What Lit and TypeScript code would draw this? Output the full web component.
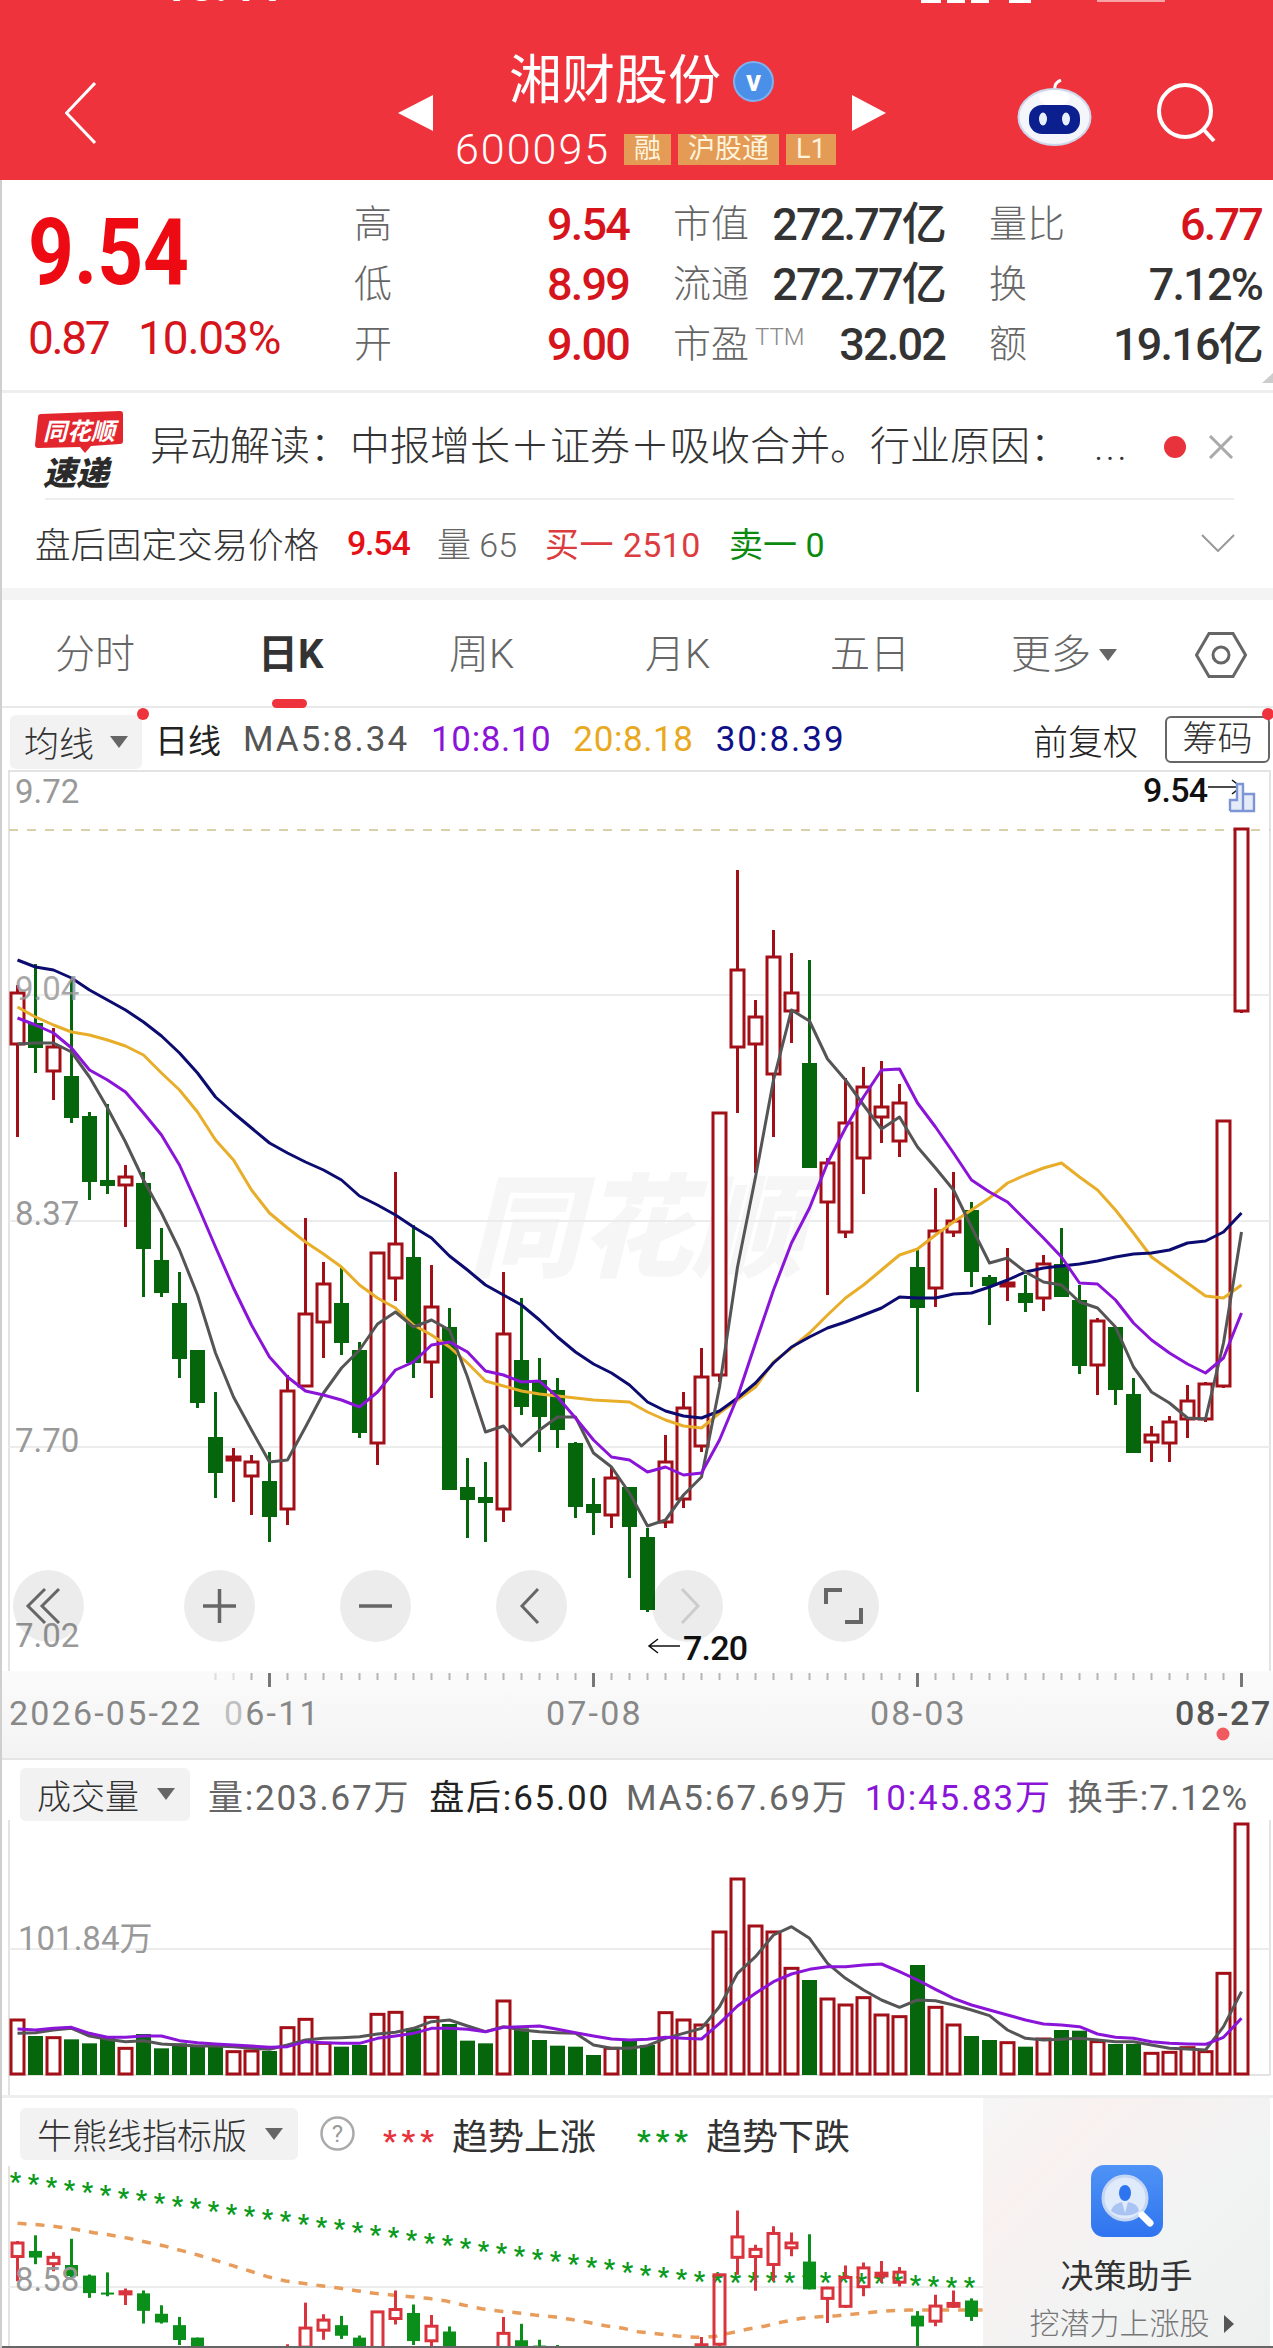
import { LitElement, html, svg, css } from 'lit';
import { customElement } from 'lit/decorators.js';

type Candle = [number, number, number, number];

const X = (i: number) => 17.5 + 18 * i;

// high, body top, body bottom, low in page pixels; the up flag is kept apart
const UP = [0, 2, 6, 12, 13, 15, 16, 17, 20, 21, 23, 27, 33, 36, 37, 38, 39, 40, 41, 42, 43, 45, 46, 47, 48, 49, 51, 52, 55, 57, 60, 63, 64, 65, 66, 67, 68];
const CANDLES: Candle[] = [
  [985, 993, 1044, 1137], [964, 1023, 1048, 1073], [1028, 1047, 1071, 1100], [977, 1076, 1118, 1123],
  [1112, 1116, 1182, 1200], [1104, 1180, 1186, 1194], [1165, 1177, 1185, 1227], [1172, 1183, 1249, 1297],
  [1228, 1260, 1293, 1297], [1272, 1303, 1359, 1378], [1350, 1350, 1403, 1408], [1392, 1437, 1473, 1498],
  [1448, 1457, 1460, 1502], [1455, 1462, 1476, 1515], [1452, 1481, 1517, 1542], [1375, 1391, 1509, 1525],
  [1218, 1314, 1386, 1386], [1262, 1284, 1322, 1358], [1268, 1303, 1343, 1355], [1342, 1350, 1433, 1438],
  [1252, 1253, 1443, 1465], [1172, 1244, 1278, 1301], [1225, 1257, 1363, 1378], [1265, 1307, 1362, 1398],
  [1308, 1327, 1490, 1490], [1458, 1487, 1500, 1538], [1462, 1497, 1503, 1542], [1272, 1334, 1509, 1522],
  [1298, 1360, 1407, 1415], [1358, 1380, 1417, 1452], [1378, 1390, 1430, 1448], [1442, 1443, 1507, 1518],
  [1478, 1504, 1513, 1535], [1468, 1478, 1515, 1528], [1487, 1487, 1527, 1578], [1528, 1537, 1610, 1612],
  [1435, 1462, 1522, 1528], [1392, 1408, 1499, 1508], [1348, 1377, 1446, 1452], [1113, 1113, 1375, 1382],
  [870, 970, 1047, 1113], [1000, 1017, 1044, 1173], [930, 957, 1074, 1137], [953, 993, 1011, 1043],
  [960, 1063, 1168, 1168], [1158, 1163, 1202, 1295], [1078, 1123, 1232, 1238], [1067, 1087, 1158, 1194],
  [1061, 1107, 1117, 1143], [1084, 1103, 1141, 1157], [1250, 1267, 1308, 1392], [1188, 1231, 1288, 1307],
  [1172, 1221, 1232, 1237], [1202, 1210, 1272, 1287], [1275, 1277, 1286, 1325], [1248, 1283, 1286, 1301],
  [1275, 1293, 1303, 1312], [1255, 1264, 1298, 1311], [1228, 1264, 1297, 1297], [1285, 1300, 1366, 1374],
  [1318, 1321, 1365, 1395], [1327, 1327, 1390, 1405], [1378, 1394, 1453, 1453], [1426, 1435, 1442, 1462],
  [1416, 1422, 1443, 1462], [1385, 1401, 1419, 1438], [1382, 1384, 1419, 1422], [1120, 1121, 1386, 1388],
  [828, 829, 1011, 1013],
];

const MA5 = [1044, 1043, 1043, 1052, 1077, 1108, 1142, 1180, 1213, 1250, 1295, 1353, 1397, 1430, 1462, 1460, 1427, 1393, 1368, 1350, 1324, 1312, 1327, 1320, 1330, 1377, 1432, 1426, 1446, 1430, 1417, 1417, 1453, 1467, 1493, 1526, 1520, 1495, 1477, 1387, 1267, 1177, 1080, 1010, 1021, 1059, 1080, 1105, 1129, 1117, 1147, 1168, 1190, 1227, 1263, 1258, 1272, 1282, 1285, 1302, 1308, 1327, 1367, 1392, 1403, 1418, 1419, 1343, 1232];
const MA10 = [1018, 1025, 1033, 1048, 1070, 1080, 1092, 1113, 1135, 1165, 1205, 1247, 1288, 1325, 1357, 1377, 1391, 1395, 1400, 1407, 1392, 1370, 1362, 1345, 1342, 1352, 1371, 1375, 1382, 1381, 1397, 1418, 1440, 1457, 1460, 1472, 1467, 1475, 1473, 1440, 1397, 1343, 1290, 1243, 1208, 1163, 1128, 1097, 1070, 1069, 1103, 1127, 1153, 1180, 1192, 1202, 1220, 1238, 1257, 1283, 1284, 1300, 1323, 1340, 1353, 1364, 1373, 1358, 1313];
const MA20 = [1007, 1017, 1025, 1032, 1035, 1040, 1046, 1055, 1073, 1090, 1112, 1140, 1160, 1190, 1213, 1228, 1242, 1254, 1267, 1285, 1298, 1308, 1325, 1335, 1347, 1363, 1381, 1386, 1391, 1394, 1396, 1398, 1400, 1401, 1402, 1412, 1420, 1426, 1428, 1413, 1400, 1387, 1362, 1348, 1333, 1315, 1298, 1285, 1270, 1255, 1249, 1235, 1222, 1210, 1198, 1183, 1175, 1168, 1163, 1177, 1190, 1210, 1233, 1257, 1270, 1283, 1296, 1298, 1285];
const MA30 = [960, 967, 970, 978, 990, 1000, 1010, 1022, 1036, 1053, 1073, 1097, 1113, 1128, 1143, 1153, 1162, 1170, 1180, 1196, 1205, 1215, 1227, 1238, 1256, 1270, 1285, 1295, 1305, 1320, 1337, 1352, 1364, 1373, 1385, 1402, 1411, 1416, 1418, 1411, 1398, 1383, 1363, 1347, 1337, 1328, 1322, 1315, 1308, 1297, 1298, 1298, 1294, 1293, 1287, 1280, 1272, 1268, 1266, 1264, 1261, 1257, 1254, 1253, 1250, 1243, 1241, 1232, 1213];

// volume values are offsets from y = 1950, three offsets to the pixel
const VOL = [210, 258, 263, 268, 280, 263, 295, 252, 295, 280, 285, 285, 305, 303, 303, 233, 208, 280, 290, 285, 193, 187, 235, 202, 222, 272, 280, 153, 235, 270, 287, 290, 315, 295, 272, 285, 188, 210, 225, -54, -213, -72, -54, 55, 90, 147, 165, 143, 195, 200, 45, 172, 225, 258, 270, 278, 290, 267, 240, 242, 275, 282, 282, 310, 307, 293, 305, 70, -378];
const VOL_MA5 = [250, 248, 240, 235, 258, 268, 275, 272, 282, 285, 288, 288, 290, 295, 298, 285, 270, 265, 263, 260, 252, 247, 235, 215, 210, 228, 245, 230, 240, 245, 248, 250, 285, 295, 295, 287, 265, 250, 235, 170, 70, 20, -45, -70, -35, 40, 85, 120, 150, 172, 150, 152, 165, 180, 197, 240, 265, 270, 268, 265, 270, 275, 275, 285, 295, 297, 300, 230, 125];
const VOL_MA10 = [237, 240, 235, 232, 250, 262, 262, 258, 258, 272, 278, 282, 285, 288, 292, 290, 275, 278, 280, 280, 265, 258, 250, 235, 235, 238, 245, 232, 230, 228, 238, 248, 258, 267, 270, 268, 262, 265, 267, 220, 168, 130, 95, 72, 58, 50, 50, 45, 42, 65, 90, 118, 145, 165, 180, 195, 210, 222, 225, 230, 252, 262, 265, 275, 280, 282, 283, 262, 205];

const STAR_TAIL = [960, 965, 972, 978, 982, 982, 982, 982, 980, 980, 980, 982, 985, 985, 985, 990, 992, 995, 997];

const DASH_LEFT = [[43, 820], [100, 825], [140, 830], [185, 838], [230, 848], [270, 855], [315, 865], [360, 877], [400, 887], [445, 902], [485, 915], [530, 932], [570, 947], [612, 963], [655, 980], [700, 993], [742, 1000], [785, 1007], [830, 1014], [873, 1022], [917, 1030], [960, 1035], [1005, 1040], [1048, 1045], [1090, 1052], [1135, 1065], [1180, 1076], [1222, 1083], [1265, 1088], [1310, 1095], [1355, 1100], [1397, 1108], [1440, 1117], [1483, 1127], [1527, 1135]];
const DASH_RIGHT = [[20, 1145], [70, 1152], [115, 1158], [160, 1162], [205, 1160], [240, 1150], [285, 1138], [330, 1128], [375, 1115], [418, 1105], [462, 1100], [505, 1097], [548, 1092], [590, 1087], [635, 1082], [680, 1080], [725, 1080], [770, 1080], [815, 1080], [860, 1080]];

const line = (ys: number[], cls: string) =>
  svg`<polyline class=${cls} points=${ys.map((y, i) => `${X(i)},${y}`).join(' ')}></polyline>`;

const mainCandle = (c: Candle, i: number) => {
  const x = X(i);
  if (UP.includes(i)) {
    return svg`<path class="wick up" d="M${x} ${c[0]}V${c[1]}M${x} ${c[2]}V${c[3]}"></path>
      <rect class="hollow" x=${x - 6.5} y=${c[1]} width="13" height=${c[2] - c[1]}></rect>`;
  }
  return svg`<path class="wick down" d="M${x} ${c[0]}V${c[3]}"></path>
    <rect class="solid" x=${x - 7.5} y=${c[1]} width="15" height=${Math.max(c[2] - c[1], 3)}></rect>`;
};

const miniY = (y: number) => 2243 + 0.265 * (y - 993);

const miniCandle = (c: Candle, i: number) => {
  const x = X(i);
  const [h, t, b, l] = c.map(miniY);
  if (UP.includes(i)) {
    return svg`<path class="mini-wick up" d="M${x} ${h}V${t}M${x} ${b}V${l}"></path>
      <rect class="mini-hollow" x=${x - 5.5} y=${t} width="11" height=${Math.max(b - t, 2)}></rect>`;
  }
  return svg`<path class="mini-wick down" d="M${x} ${h}V${l}"></path>
    <rect class="mini-solid" x=${x - 6.5} y=${t} width="13" height=${Math.max(b - t, 2)}></rect>`;
};

@customElement('app-root')
export class AppRoot extends LitElement {
  static styles = css`
    :host {
      display: block;
      position: relative;
      width: 1273px;
      height: 2348px;
      overflow: hidden;
      background: #fff;
      color: #333;
      font-family: Roboto, 'Noto Sans CJK SC', sans-serif;
    }
    :host::before {
      content: '';
      position: absolute;
      z-index: 5;
      left: 0;
      top: 180px;
      bottom: 0;
      width: 2px;
      background: #cfcfcf;
    }
    * {
      box-sizing: border-box;
    }
    svg {
      display: block;
    }

    .header {
      position: relative;
      display: flex;
      align-items: center;
      height: 180px;
      padding: 50px 0 5px 65px;
      background: #ef333d;
      color: #fff;
    }
    .status {
      position: absolute;
      left: 162px;
      top: -35px;
      font-size: 46px;
      line-height: 40px;
      font-weight: 700;
    }
    .status-right {
      position: absolute;
      left: 921px;
      top: 0;
    }
    .back {
      width: 31px;
    }
    .tri-left {
      margin-left: 302px;
      width: 0;
      height: 0;
      border: solid transparent;
      border-width: 18px 35px 18px 0;
      border-right-color: #fff;
    }
    .tri-right {
      margin-left: 24px;
      width: 0;
      height: 0;
      border: solid transparent;
      border-width: 18px 0 18px 34px;
      border-left-color: #fff;
    }
    .title-block {
      margin-left: 22px;
      width: 373px;
      align-self: flex-start;
      margin-top: 6px;
      display: flex;
      flex-direction: column;
      align-items: center;
    }
    .title-row {
      display: flex;
      align-items: center;
      gap: 12px;
      height: 50px;
      font-size: 53px;
      line-height: 50px;
    }
    .verified {
      display: flex;
      align-items: center;
      justify-content: center;
      width: 41px;
      height: 41px;
      border-radius: 50%;
      background: #4a8fe8;
      border: 2px solid #7fb0ef;
      font-size: 30px;
      line-height: 30px;
      font-weight: 700;
    }
    .code-row {
      display: flex;
      align-items: center;
      margin-top: 27px;
      width: 100%;
    }
    .code {
      font-size: 43px;
      line-height: 32px;
      letter-spacing: 2px;
      font-weight: 300;
      margin-right: 14px;
    }
    .tag {
      height: 31px;
      padding: 0 10px;
      margin-right: 7px;
      background: #e39b55;
      font-size: 27px;
      line-height: 31px;
      color: #fff3dc;
      white-space: nowrap;
    }

    .robot {
      margin-left: 131px;
    }
    .search {
      margin-left: 65px;
    }

    .quote {
      display: flex;
      height: 210px;
      padding-left: 28px;
      position: relative;
    }
    .price {
      width: 326px;
    }
    .big {
      margin-top: 40px;
      font-size: 92px;
      line-height: 66px;
      font-weight: 700;
      color: #ee0a12;
      transform: scaleX(0.87);
      transform-origin: left;
    }
    .change {
      display: flex;
      gap: 30px;
      margin-top: 36px;
      font-size: 46px;
      line-height: 33px;
      color: #d6141c;
    }
    .change .n {
      letter-spacing: -2.4px;
    }
    .change .p {
      letter-spacing: -1.2px;
    }
    .stats {
      display: grid;
      grid-template-columns: 275px 272px 273px;
      grid-auto-rows: 60px;
      column-gap: 44px;
      padding-top: 15px;
    }
    .cell {
      display: flex;
      align-items: center;
      justify-content: space-between;
    }
    .lbl {
      font-size: 38px;
      line-height: 50px;
      padding-bottom: 2px;
      color: #666;
      font-weight: 300;
      white-space: nowrap;
    }
    .lbl sup {
      font-size: 24px;
      line-height: 24px;
      vertical-align: 12px;
      margin-left: 6px;
      color: #888;
    }
    .val {
      font-size: 45px;
      line-height: 60px;
      letter-spacing: -1.8px;
      font-weight: 500;
      color: #333;
      white-space: nowrap;
    }
    .val.r {
      color: #d6141c;
    }
    .corner {
      position: absolute;
      right: 0;
      bottom: 7px;
      width: 0;
      height: 0;
      border: solid transparent;
      border-width: 0 0 10px 11px;
      border-bottom-color: #ccc;
    }

    .news {
      border-top: 3px solid #eee;
      height: 198px;
      padding-left: 35px;
    }
    .news-top {
      display: flex;
      align-items: center;
      height: 105px;
      padding-top: 2px;
    }
    .logo {
      width: 88px;
      height: 80px;
      margin-top: 8px;
      position: relative;
    }
    .headline {
      margin-left: 27px;
      width: 1000px;
      font-size: 40px;
      line-height: 46px;
      font-weight: 300;
      white-space: nowrap;
      color: #333;
    }
    .ell {
      margin-left: 24px;
      letter-spacing: 2px;
    }
    .dot {
      width: 22px;
      height: 22px;
      border-radius: 50%;
      background: #e8323c;
      margin-left: 14px;
    }
    .close {
      margin-left: 22px;
    }
    .news-rule {
      height: 2px;
      margin: 0 39px 0 10px;
      background: #eee;
    }
    .news-bottom {
      display: flex;
      align-items: center;
      height: 90px;
      font-size: 34px;
      padding-bottom: 5px;
      white-space: nowrap;
    }
    .news-bottom .fixed {
      width: 312px;
      font-size: 35.5px;
      font-weight: 300;
    }
    .news-bottom .a {
      color: #e60f17;
      width: 90px;
      letter-spacing: -1.2px;
      font-weight: 500;
    }
    .news-bottom .b {
      color: #666;
      width: 108px;
      font-weight: 300;
    }
    .news-bottom .c {
      color: #dc3c40;
      width: 184px;
      letter-spacing: 0.4px;
    }
    .news-bottom .d {
      color: #0c8a10;
      width: 472px;
    }
    .band {
      height: 12px;
      background: #f4f4f4;
    }

    .tabs {
      position: relative;
      display: grid;
      grid-template-columns: 203px 191px 196px 185px 181px 184px 1fr;
      align-items: start;
      height: 108px;
      padding: 32px 0 0 55px;
      border-bottom: 2px solid #e9e9e9;
      font-size: 40px;
      line-height: 46px;
      font-weight: 300;
      color: #666;
    }
    .tabs .on {
      position: relative;
      font-weight: 700;
      color: #333;
    }
    .tabs .on::after {
      content: '';
      position: absolute;
      left: 14px;
      top: 67px;
      width: 35px;
      height: 9px;
      border-radius: 5px;
      background: #ef333d;
    }
    .more {
      display: flex;
      align-items: center;
      gap: 8px;
    }
    .caret {
      width: 0;
      height: 0;
      border: solid transparent;
      border-width: 12px 9px 0 9px;
      border-top-color: #666;
    }

    .toolbar {
      position: relative;
      display: flex;
      align-items: center;
      height: 62px;
      padding-left: 10px;
      font-size: 35px;
      letter-spacing: 0.6px;
      white-space: nowrap;
    }
    .chip {
      display: flex;
      align-items: center;
      background: #f2f2f2;
      border-radius: 6px;
      font-size: 34px;
      letter-spacing: 0;
      font-weight: 300;
      color: #333;
    }
    .toolbar .chip {
      height: 54px;
      width: 132px;
      padding-left: 14px;
      gap: 16px;
      margin-top: 5px;
      font-size: 35px;
    }
    .day {
      margin-left: 13px;
      font-size: 33px;
      letter-spacing: 0;
      color: #222;
    }
    .ma {
      margin-left: 22px;
    }
    .gray {
      color: #555;
      letter-spacing: 2px;
    }
    .purple {
      color: #8a14d8;
    }
    .orange {
      color: #e8a820;
    }
    .navy {
      color: #10108a;
      letter-spacing: 2px;
    }
    .adj {
      margin-left: auto;
      font-size: 35px;
      letter-spacing: 0;
      color: #222;
      font-weight: 300;
    }
    .chips-btn {
      margin: 0 3px 0 27px;
      width: 105px;
      height: 47px;
      border: 2px solid #666;
      border-radius: 6px;
      font-size: 35px;
      line-height: 43px;
      letter-spacing: 0;
      text-align: center;
      font-weight: 300;
      color: #333;
    }
    .pin {
      position: absolute;
      width: 12px;
      height: 12px;
      border-radius: 50%;
      background: #ef333d;
    }
    .pin.one {
      left: 137px;
      top: 0;
    }
    .pin.two {
      left: 1262px;
      top: 0;
    }

    .chart {
      position: relative;
    }
    .zoom-bar {
      position: absolute;
      left: 13px;
      top: 800px;
      display: flex;
      gap: 85px;
    }
    .zoom-bar .wide {
      margin-right: 15px;
    }
    .zoom-btn {
      width: 71px;
      height: 72px;
      border-radius: 50%;
      background: rgba(0, 0, 0, 0.075);
    }

    text {
      font-family: Roboto, 'Noto Sans CJK SC', sans-serif;
    }
    .axis-num {
      font-size: 33px;
      fill: #999;
    }
    .watermark {
      font-size: 112px;
      font-weight: 900;
      font-style: italic;
      fill: #f6f6f6;
    }
    .mark {
      font-size: 34px;
      font-weight: 500;
      fill: #111;
      letter-spacing: -0.8px;
    }
    .date {
      font-size: 34px;
      fill: #888;
      letter-spacing: 2.2px;
    }
    .date.now {
      fill: #555;
      font-weight: 500;
      letter-spacing: 1.6px;
    }
    .grid {
      stroke: #ececec;
      stroke-width: 2;
      fill: none;
    }
    .frame {
      stroke: #e3e3e3;
      stroke-width: 2;
      fill: none;
    }
    .dashed {
      stroke: #d9cfa8;
      stroke-width: 2;
      stroke-dasharray: 9 9;
      fill: none;
    }
    .wick {
      stroke-width: 3;
      fill: none;
    }
    .wick.up {
      stroke: #a20f16;
    }
    .wick.down {
      stroke: #06660c;
    }
    .hollow {
      fill: #fff;
      stroke: #a20f16;
      stroke-width: 3;
    }
    .solid {
      fill: #06660c;
    }
    .l5,
    .l10,
    .l20,
    .l30 {
      fill: none;
      stroke-width: 3;
      stroke-linejoin: round;
    }
    .l5 {
      stroke: #555;
    }
    .l10 {
      stroke: #8a14d8;
    }
    .l20 {
      stroke: #e8ae2a;
    }
    .l30 {
      stroke: #0b0b70;
    }
    .minor {
      stroke: #b4b4b4;
      stroke-width: 2;
    }
    .major {
      stroke: #777;
      stroke-width: 3;
    }
    .mini-wick {
      stroke-width: 3;
      fill: none;
    }
    .mini-wick.up {
      stroke: #d9343d;
    }
    .mini-wick.down {
      stroke: #0a8f1a;
    }
    .mini-hollow {
      fill: none;
      stroke: #d9343d;
      stroke-width: 3;
    }
    .mini-solid {
      fill: #0a8f1a;
    }
    .star {
      font-size: 25px;
      font-weight: 700;
      fill: #0a9a1e;
    }
    .trend {
      fill: none;
      stroke: #e89c5c;
      stroke-width: 3.5;
      stroke-dasharray: 9 9;
    }

    .axis {
      height: 87px;
      background: linear-gradient(180deg, #fbfbfb, #f3f3f3);
    }

    .vol-head {
      display: flex;
      align-items: center;
      height: 62px;
      padding: 8px 0 0 20px;
      border-top: 2px solid #e5e5e5;
      font-size: 35px;
      letter-spacing: 1.8px;
      white-space: nowrap;
      color: #666;
    }
    .vol-head .chip {
      width: 170px;
      height: 53px;
      padding-left: 17px;
      gap: 18px;
      margin-right: 18px;
      flex: none;
    }
    .vol-head .dark {
      margin-left: 19px;
      color: #222;
    }
    .vol-head .sp {
      margin-left: 16px;
    }
    .vol-head .last {
      letter-spacing: 1px;
    }

    .signal {
      display: flex;
      height: 253px;
      border-top: 3px solid #eee;
      border-bottom: 2px solid #666;
    }
    .signal-left {
      width: 983px;
      flex: none;
    }
    .signal-head {
      display: flex;
      align-items: center;
      height: 68px;
      padding: 3px 0 0 20px;
      font-size: 36px;
      white-space: nowrap;
    }
    .signal-head .chip {
      width: 278px;
      height: 52px;
      padding-left: 17px;
      gap: 18px;
      font-size: 35px;
    }
    .help {
      margin-left: 22px;
    }
    .stars {
      margin-left: 28px;
      width: 69px;
      font-weight: 700;
      font-size: 30px;
      letter-spacing: 5px;
      padding-top: 14px;
    }
    .stars.red {
      color: #e8323c;
    }
    .stars.green {
      color: #0a9a1e;
      margin-left: 41px;
    }
    .trend-label {
      font-size: 36px;
      color: #333;
    }
    .advisor {
      flex: 1;
      margin-right: 3px;
      display: flex;
      flex-direction: column;
      align-items: center;
      padding-top: 67px;
      background: linear-gradient(135deg, #f6f6f6 0%, #f8f1f0 25%, #f2f3f3 60%, #eef0f0 100%);
    }
    .advisor-name {
      margin-top: 20px;
      font-size: 33px;
      line-height: 40px;
      color: #333;
    }
    .advisor-sub {
      display: flex;
      align-items: center;
      gap: 14px;
      margin-top: 10px;
      padding-left: 10px;
      font-size: 30px;
      line-height: 34px;
      font-weight: 300;
      color: #777;
    }
    .caret-right {
      width: 0;
      height: 0;
      border: solid transparent;
      border-width: 9px 0 9px 10px;
      border-left-color: #555;
    }
  `;

  renderHeader() {
    return html`<div class="header">
      <div class="status">18:44</div>
      <svg class="status-right" width="260" height="4" fill="#fff">
        <rect x="0" y="0" width="20" height="3"></rect><rect x="26" y="0" width="18" height="3"></rect>
        <rect x="50" y="0" width="18" height="3"></rect><rect x="88" y="0" width="22" height="3"></rect>
        <rect x="176" y="0" width="68" height="2" opacity=".55"></rect>
      </svg>
      <svg class="back" viewBox="0 0 31 62" height="62">
        <path d="M30 1 1.5 31 30 61" fill="none" stroke="#fff" stroke-width="3"></path>
      </svg>
      <div class="tri-left"></div>
      <div class="title-block">
        <div class="title-row">湘财股份<span class="verified">v</span></div>
        <div class="code-row">
          <span class="code">600095</span>
          <span class="tag">融</span><span class="tag">沪股通</span><span class="tag">L1</span>
        </div>
      </div>
      <div class="tri-right"></div>
      <svg class="robot" width="75" height="68" viewBox="0 0 75 68">
        <path d="M38 12C37 7 39 3 44 1" fill="none" stroke="#fff" stroke-width="3"></path>
        <ellipse cx="37.500" cy="38" rx="36" ry="28" fill="#f4f6fb" stroke="#cdd5ea" stroke-width="2"></ellipse>
        <ellipse cx="37.500" cy="19" rx="15" ry="8" fill="#fff"></ellipse>
        <rect x="12" y="26" width="51" height="29" rx="13" fill="#0b1f8f"></rect>
        <ellipse cx="26" cy="40" rx="4" ry="6.500" fill="#e8f0ff"></ellipse>
        <ellipse cx="49" cy="40" rx="4" ry="6.500" fill="#e8f0ff"></ellipse>
      </svg>
      <svg class="search" width="60" height="60" viewBox="0 0 60 60">
        <circle cx="28" cy="28" r="26" fill="none" stroke="#fff" stroke-width="4"></circle>
        <path d="M47 47 57 58" stroke="#fff" stroke-width="4"></path>
      </svg>
    </div>`;
  }

  renderQuote() {
    const rows = [
      ['高', '9.54', true, '市值', '272.77亿', false, '量比', '6.77', true],
      ['低', '8.99', true, '流通', '272.77亿', false, '换', '7.12%', false],
      ['开', '9.00', true, '市盈', '32.02', false, '额', '19.16亿', false],
    ];
    return html`<div class="quote">
      <div class="price">
        <div class="big">9.54</div>
        <div class="change"><span class="n">0.87</span><span class="p">10.03%</span></div>
      </div>
      <div class="stats">
        ${rows.map(
          r => html`
            <div class="cell"><span class="lbl">${r[0]}</span><span class="val r">${r[1]}</span></div>
            <div class="cell">
              <span class="lbl">${r[3]}${r[3] === '市盈' ? html`<sup>TTM</sup>` : ''}</span><span class="val">${r[4]}</span>
            </div>
            <div class="cell"><span class="lbl">${r[6]}</span><span class="val ${r[8] ? 'r' : ''}">${r[7]}</span></div>
          `,
        )}
      </div>
      <div class="corner"></div>
    </div>`;
  }

  renderNews() {
    return html`<div class="news">
      <div class="news-top">
        <svg class="logo" viewBox="0 0 88 80">
          <path d="M6 3 85 0Q88 0 88 3V30Q88 33 85 33L56 35 50 42 45 36 3 37Q0 37 0 34L3 6Q3 3 6 3Z" fill="#e3262e"></path>
          <text x="8" y="29" font-size="24" font-weight="700" font-style="italic" fill="#fff">同花顺</text>
          <text x="8" y="74" font-size="33" font-weight="900" font-style="italic" fill="#2b2b2b">速递</text>
        </svg>
        <div class="headline">异动解读：中报增长＋证券＋吸收合并。行业原因：<span class="ell">...</span></div>
        <div class="dot"></div>
        <svg class="close" width="26" height="24" viewBox="0 0 26 24">
          <path d="M2 1 24 23M24 1 2 23" stroke="#aaa" stroke-width="3"></path>
        </svg>
      </div>
      <div class="news-rule"></div>
      <div class="news-bottom">
        <span class="fixed">盘后固定交易价格</span>
        <span class="a">9.54</span>
        <span class="b">量 65</span>
        <span class="c">买一 2510</span>
        <span class="d">卖一 0</span>
        <svg width="34" height="18" viewBox="0 0 34 18">
          <path d="M1 1 17 17 33 1" fill="none" stroke="#999" stroke-width="2"></path>
        </svg>
      </div>
    </div>
    <div class="band"></div>`;
  }

  renderTabs() {
    return html`<div class="tabs">
      <span>分时</span><span class="on">日K</span><span>周K</span><span>月K</span><span>五日</span>
      <span class="more">更多<i class="caret"></i></span>
      <svg width="52" height="46" viewBox="0 0 52 46">
        <path d="M1.5 23 14 1.5H38L50.5 23 38 44.5H14Z" fill="none" stroke="#666" stroke-width="3"></path>
        <circle cx="26" cy="23" r="8" fill="none" stroke="#666" stroke-width="3"></circle>
      </svg>
    </div>`;
  }

  renderToolbar() {
    return html`<div class="toolbar">
      <div class="chip">均线<i class="caret"></i></div>
      <span class="day">日线</span>
      <span class="ma gray">MA5:8.34</span>
      <span class="ma purple">10:8.10</span>
      <span class="ma orange">20:8.18</span>
      <span class="ma navy">30:8.39</span>
      <span class="adj">前复权</span>
      <div class="chips-btn">筹码</div>
      <i class="pin one"></i><i class="pin two"></i>
    </div>`;
  }

  renderChart() {
    return html`<div class="chart">
      <svg width="1273" height="901" viewBox="0 770 1273 901">
        <text class="watermark" x="468" y="1268">同花顺</text>
        <path class="frame" d="M9 1671V771H1270V1671"></path>
        <path class="grid" d="M9 995H1270M9 1221H1270M9 1447H1270"></path>
        <path class="dashed" d="M9 830H1270"></path>
        ${CANDLES.map(mainCandle)}
        ${line(MA20, 'l20')} ${line(MA30, 'l30')} ${line(MA5, 'l5')} ${line(MA10, 'l10')}
        <text class="axis-num" x="15" y="803">9.72</text>
        <text class="axis-num" x="15" y="1000" opacity=".85">9.04</text>
        <text class="axis-num" x="15" y="1225">8.37</text>
        <text class="axis-num" x="15" y="1452">7.70</text>
        <text class="axis-num" x="15" y="1647">7.02</text>
        <text class="mark" x="1143" y="802">9.54</text>
        <path d="M1208 787H1240M1232 780 1241 787 1232 794" fill="none" stroke="#111" stroke-width="1.5"></path>
        <path d="M1230 811V800H1237V784H1243V811M1243 811V794H1254V811H1230" fill="#e6ebf8" stroke="#7d95d5" stroke-width="2.4"></path>
        <text class="mark" x="683" y="1660">7.20</text>
        <path d="M680 1646H650M658 1639 649 1646 658 1653" fill="none" stroke="#111" stroke-width="1.5"></path>
      </svg>
      <div class="zoom-bar">
        <div class="zoom-btn wide">
          <svg width="71" height="72" viewBox="0 0 71 72">
            <path d="M32 19 15 36 32 53M46 19 29 36 46 53" fill="none" stroke="#666" stroke-width="3"></path>
          </svg>
        </div>
        <div class="zoom-btn">
          <svg width="71" height="72" viewBox="0 0 71 72"><path d="M19 36H52M35.500 19V53" fill="none" stroke="#666" stroke-width="3.500"></path></svg>
        </div>
        <div class="zoom-btn">
          <svg width="71" height="72" viewBox="0 0 71 72"><path d="M19 36H52" fill="none" stroke="#666" stroke-width="3.500"></path></svg>
        </div>
        <div class="zoom-btn">
          <svg width="71" height="72" viewBox="0 0 71 72"><path d="M42 19 26 36 42 53" fill="none" stroke="#666" stroke-width="3"></path></svg>
        </div>
        <div class="zoom-btn">
          <svg width="71" height="72" viewBox="0 0 71 72"><path d="M30 19 46 36 30 53" fill="none" stroke="#ccc" stroke-width="3"></path></svg>
        </div>
        <div class="zoom-btn">
          <svg width="71" height="72" viewBox="0 0 71 72"><path d="M18 34V20H34M53 38V52H37" fill="none" stroke="#666" stroke-width="4"></path></svg>
        </div>
      </div>
    </div>`;
  }

  renderAxis() {
    const ticks = Array.from({ length: 58 }, (_, k) => k + 11);
    const major = [14, 32, 50, 68];
    return html`<div class="axis">
      <svg width="1273" height="87" viewBox="0 1671 1273 87">
        ${ticks.map(
          i => svg`<path class=${major.includes(i) ? 'major' : 'minor'} opacity=${i < 13 ? 0.4 : 1}
            d="M${X(i)} 1673V${major.includes(i) ? 1687 : 1680}"></path>`,
        )}
        <text class="date" x="9" y="1725">2026-05-22</text>
        <text class="date" x="224" y="1725"><tspan opacity=".5">0</tspan>6-11</text>
        <text class="date" x="546" y="1725">07-08</text>
        <text class="date" x="870" y="1725">08-03</text>
        <text class="date now" x="1175" y="1725">08-27</text>
        <circle cx="1223" cy="1734" r="6.500" fill="#f05a60"></circle>
      </svg>
    </div>`;
  }

  renderVolume() {
    const y = (z: number) => 1950 + z / 3;
    return html`<div class="vol-head">
        <div class="chip">成交量<i class="caret"></i></div>
        <span>量:203.67万</span>
        <span class="dark">盘后:65.00</span>
        <span class="sp">MA5:67.69万</span>
        <span class="sp purple">10:45.83万</span>
        <span class="sp last">换手:7.12%</span>
      </div>
      <svg width="1273" height="275" viewBox="0 1820 1273 275">
        <path class="frame" d="M9 1820V2095M1270 1820V2075M9 2075H1270"></path>
        <path class="grid" d="M9 1949H1270"></path>
        <text class="axis-num" x="18" y="1950">101.84万</text>
        ${VOL.map((z, i) =>
          UP.includes(i)
            ? svg`<rect class="hollow" x=${X(i) - 6.5} y=${y(z)} width="13" height=${2074 - y(z)}></rect>`
            : svg`<rect class="solid" x=${X(i) - 7.5} y=${y(z)} width="15" height=${2075 - y(z)}></rect>`,
        )}
        ${line(VOL_MA5.map(y), 'l5')} ${line(VOL_MA10.map(y), 'l10')}
      </svg>`;
  }

  renderSignal() {
    const starY = (k: number) => (k < 35 ? 2176.7 + 2.65 * k : 1950 + STAR_TAIL[k - 35] / 3);
    const stars = Array.from({ length: 54 }, (_, k) => k);
    const dash = [
      ...DASH_LEFT.map(([x, y]) => [x / 2.45, 1950 + y / 3]),
      ...DASH_RIGHT.map(([x, y]) => [630 + x / 2.4386, 1950 + y / 3]),
    ];
    return html`<div class="signal">
      <div class="signal-left">
        <div class="signal-head">
          <div class="chip">牛熊线指标版<i class="caret"></i></div>
          <svg class="help" width="35" height="35" viewBox="0 0 35 35">
            <circle cx="17.500" cy="17.500" r="16" fill="none" stroke="#aaa" stroke-width="2.500"></circle>
            <text x="17.500" y="26" text-anchor="middle" font-size="24" fill="#999">?</text>
          </svg>
          <span class="stars red">***</span><span class="trend-label">趋势上涨</span>
          <span class="stars green">***</span><span class="trend-label">趋势下跌</span>
        </div>
        <svg width="983" height="180" viewBox="0 2166 983 180">
          <path class="frame" d="M9 2166V2346"></path>
          <path class="grid" d="M9 2287H983"></path>
          ${stars.map(k => svg`<text class="star" x=${15.5 + 18 * k} y=${starY(k) + 14} text-anchor="middle">*</text>`)}
          <polyline class="trend" points=${dash.map(p => p.join(',')).join(' ')}></polyline>
          ${CANDLES.slice(0, 54).map(miniCandle)}
          <text class="axis-num" x="15" y="2291">8.58</text>
        </svg>
      </div>
      <div class="advisor">
        <svg width="72" height="72" viewBox="0 0 72 72">
          <defs>
            <linearGradient id="adv" x1="0" y1="0" x2="0" y2="1">
              <stop offset="0" stop-color="#4f93f6"></stop>
              <stop offset="1" stop-color="#2f74ef"></stop>
            </linearGradient>
          </defs>
          <rect width="72" height="72" rx="13" fill="url(#adv)"></rect>
          <circle cx="34" cy="33" r="22" fill="#dfeafb" stroke="#c5d6f5" stroke-width="3"></circle>
          <ellipse cx="34" cy="28" rx="6" ry="8" fill="#2f74ef"></ellipse>
          <path d="M20 46C22 39 28 38 31 37L34 48 37 37C41 38 47 39 48 46 41 52 27 52 20 46Z" fill="#a9c4f2"></path>
          <path d="M51 50 59 58" stroke="#fff" stroke-width="7" stroke-linecap="round"></path>
        </svg>
        <div class="advisor-name">决策助手</div>
        <div class="advisor-sub">挖潜力上涨股<i class="caret-right"></i></div>
      </div>
    </div>`;
  }

  render() {
    return html`
      ${this.renderHeader()} ${this.renderQuote()} ${this.renderNews()} ${this.renderTabs()} ${this.renderToolbar()}
      ${this.renderChart()} ${this.renderAxis()} ${this.renderVolume()} ${this.renderSignal()}
    `;
  }
}
